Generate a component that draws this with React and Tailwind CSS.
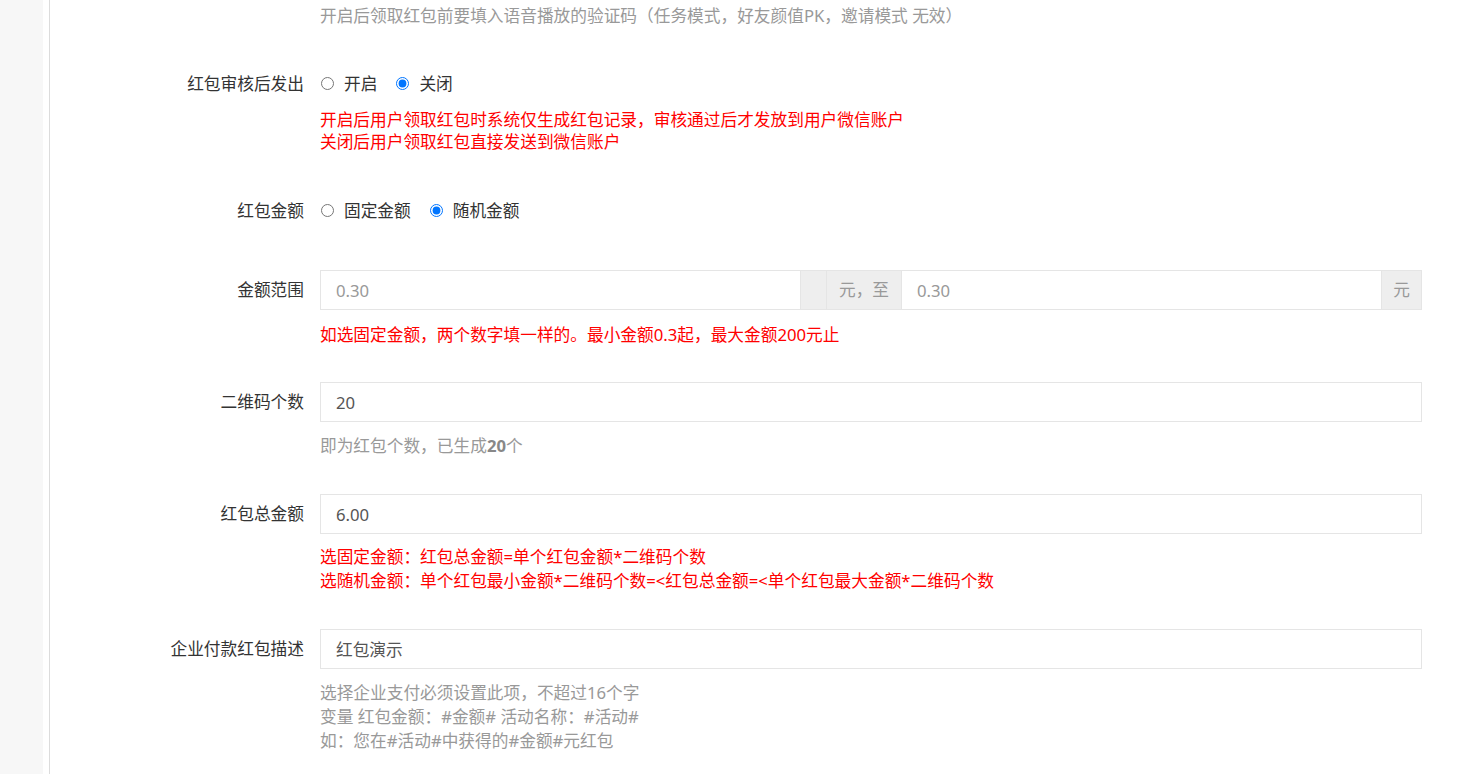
import React from 'react';

// Form rows of the red-packet settings page
const Label = ({ children }) => (
  <div className="w-[270px] shrink-0 pr-[16px] text-right text-[#333]">{children}</div>
);

const Row = ({ label, className = '', children }) => (
  <div className={`flex items-center ${className}`}>
    <Label>{label}</Label>
    <div className="flex-1 min-w-0">{children}</div>
  </div>
);

const Help = ({ className = '', red, lines, lh = 'leading-[24px]' }) => (
  <div className={`flex ${className}`}>
    <div className="w-[270px] shrink-0" />
    <div className={`flex-1 ${lh} ${red ? 'text-[#ff0000]' : 'text-[#999]'}`}>
      {lines.map((l, i) => (
        <div key={i}>{l}</div>
      ))}
    </div>
  </div>
);

const Radio = ({ name, label, checked }) => (
  <label className="flex items-center mr-[18px] cursor-pointer">
    <input type="radio" name={name} defaultChecked={checked} className="w-[13px] h-[13px] ml-[1px] mr-[10px]" />
    <span className="text-[#333]">{label}</span>
  </label>
);

const TextInput = ({ value, muted }) => (
  <input
    defaultValue={value}
    className={`w-full h-[40px] border border-[#e5e5e5] px-[15px] outline-none bg-white ${muted ? 'text-[#999]' : 'text-[#555]'}`}
  />
);

const Addon = ({ children, className = '' }) => (
  <div className={`h-[40px] shrink-0 bg-[#eee] border border-[#e5e5e5] border-l-0 flex items-center justify-center text-[#999] ${className}`}>
    {children}
  </div>
);

export default function App() {
  return (
    <div className="flex min-h-screen bg-white font-['Noto_Sans','Noto_Sans_CJK_SC',sans-serif] text-[16.7px]">
      <div className="w-[43px] shrink-0 bg-[#f7f7f7]" />
      <div className="w-[6px] shrink-0" />
      <div className="flex-1 border-l border-[#dcdcdc] pr-[60px]">
        <Help className="mt-[4px]" lines={['开启后领取红包前要填入语音播放的验证码（任务模式，好友颜值PK，邀请模式 无效）']} />

        <Row label="红包审核后发出" className="mt-[36px] h-[40px]">
          <div className="flex items-center">
            <Radio name="audit" label="开启" />
            <Radio name="audit" label="关闭" checked />
          </div>
        </Row>
        <Help
          className="mt-[5px]"
          red
          lh="leading-[22px]"
          lines={['开启后用户领取红包时系统仅生成红包记录，审核通过后才发放到用户微信账户', '关闭后用户领取红包直接发送到微信账户']}
        />

        <Row label="红包金额" className="mt-[38px] h-[40px]">
          <div className="flex items-center">
            <Radio name="amount" label="固定金额" />
            <Radio name="amount" label="随机金额" checked />
          </div>
        </Row>

        <Row label="金额范围" className="mt-[39px]">
          <div className="flex items-center">
            <div className="flex-1">
              <TextInput value="0.30" muted />
            </div>
            <Addon className="w-[26px]" />
            <Addon className="w-[75px]">元，至</Addon>
            <div className="flex-1 -ml-px">
              <TextInput value="0.30" muted />
            </div>
            <Addon className="w-[40px]">元</Addon>
          </div>
        </Row>
        <Help className="mt-[13px]" red lines={['如选固定金额，两个数字填一样的。最小金额0.3起，最大金额200元止']} />

        <Row label="二维码个数" className="mt-[35px]">
          <TextInput value="20" />
        </Row>
        <Help
          className="mt-[12px]"
          lines={[
            <span>
              即为红包个数，已生成<b className="font-bold text-[#888]">20</b>个
            </span>,
          ]}
        />

        <Row label="红包总金额" className="mt-[36px]">
          <TextInput value="6.00" />
        </Row>
        <Help
          className="mt-[11px]"
          red
          lines={['选固定金额：红包总金额=单个红包金额*二维码个数', '选随机金额：单个红包最小金额*二维码个数=<红包总金额=<单个红包最大金额*二维码个数']}
        />

        <Row label="企业付款红包描述" className="mt-[36px]">
          <TextInput value="红包演示" />
        </Row>
        <Help
          className="mt-[12px]"
          lines={['选择企业支付必须设置此项，不超过16个字', '变量 红包金额：#金额# 活动名称：#活动#', '如：您在#活动#中获得的#金额#元红包']}
        />
      </div>
    </div>
  );
}
